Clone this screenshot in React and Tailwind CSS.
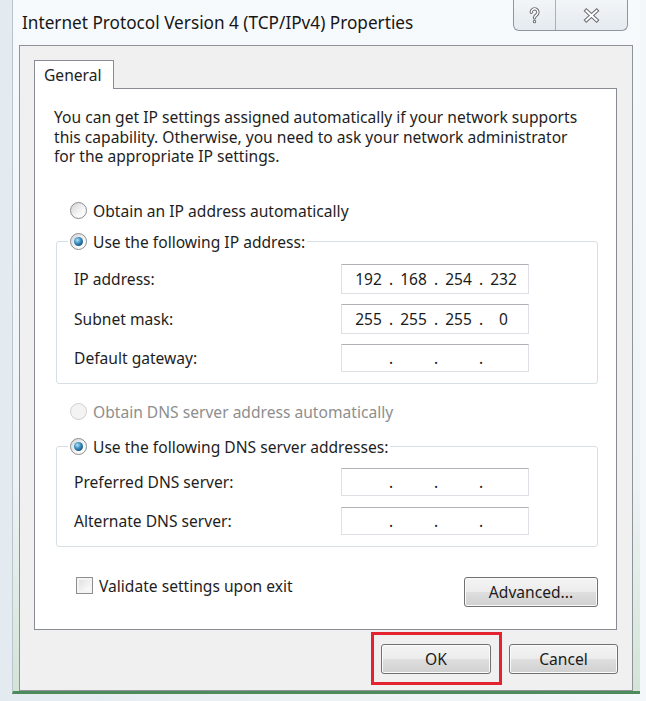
import React from 'react'

const Radio = ({ checked, disabled }) => (
  <span
    className={`flex h-[17px] w-[17px] shrink-0 items-center justify-center rounded-full border ${
      disabled
        ? 'border-[#cfcfcf] bg-[#f3f3f3]'
        : 'border-[#8a8c8e] bg-[linear-gradient(135deg,#d2d4d6_0%,#f6f6f6_60%,#ffffff_100%)]'
    }`}
  >
    {checked && (
      <span className="h-[9px] w-[9px] rounded-full bg-[radial-gradient(circle_at_38%_35%,#b4e3f7_0%,#3b8fc2_40%,#164a74_80%,#0d3355_100%)]" />
    )}
  </span>
)

const IpField = ({ parts, tall }) => (
  <div
    className={`flex w-[188px] items-center border border-[#dde1e6] border-t-[#aeb1b6] bg-white pl-[10px] text-[15.5px] text-[#1b1b1b] ${
      tall ? 'h-[30px]' : 'h-[28px]'
    }`}
  >
    {parts.map((p, i) => (
      <React.Fragment key={i}>
        {i > 0 && <span className="w-[12px] text-center">.</span>}
        <span className="w-[33px] text-center">{p}</span>
      </React.Fragment>
    ))}
  </div>
)

const WinButton = ({ children, className }) => (
  <button
    className={`flex h-[30px] items-center justify-center rounded-[3px] border border-[#707070] bg-[linear-gradient(to_bottom,#f4f4f4_0%,#ececec_48%,#dedede_52%,#d0d0d0_100%)] text-[15.6px] text-[#1b1b1b] shadow-[inset_0_0_0_1px_#fbfbfb] ${className}`}
  >
    {children}
  </button>
)

const GroupBox = ({ label, children, className }) => (
  <fieldset className={`ml-[2px] w-[542px] rounded-[3px] border border-[#d5dfe5] ${className}`}>
    <legend className="ml-[11px] px-[2px]">
      <span className="flex h-[20px] items-center gap-[6px]">
        <Radio checked />
        <span>{label}</span>
      </span>
    </legend>
    {children}
  </fieldset>
)

const Row = ({ label, children }) => (
  <div className="flex items-center justify-between pl-[17px] pr-[68px]">
    <span>{label}</span>
    {children}
  </div>
)

export default function App() {
  const empty = ['', '', '', '']
  return (
    <div className="h-[701px] w-[646px] overflow-hidden bg-[linear-gradient(to_right,#e4ebf0_0%,#f4f7f9_100%)] font-['Noto_Sans','Open_Sans',sans-serif] text-[15.6px] leading-[20px] text-[#1e1e1e]">
      <div className="ml-[12px] flex h-[694px] w-[628px] flex-col border-b-[3px] border-l border-[#4d8a5c] border-l-[#b9c4cc] bg-[linear-gradient(to_bottom,#f7fafc_0%,#eef3f6_70%,#d3e4d6_100%)] pl-[6px]">
        {/* Title bar */}
        <div className="flex h-[45px] items-start justify-between pr-[12px]">
          <div className="pl-[3px] pt-[12px] text-[17.2px] leading-[22px] text-[#161616]">
            Internet Protocol Version 4 (TCP/IPv4) Properties
          </div>
          <div className="flex h-[31px] overflow-hidden rounded-b-[6px] border border-t-0 border-[#8e969e] bg-[linear-gradient(to_bottom,#f2f5f8_0%,#e4eaef_100%)]">
            <div className="flex w-[42px] items-center justify-center border-r border-[#a8b0b8]">
              <svg width="13" height="19" viewBox="0 0 14 20">
                <g fill="none" strokeLinecap="round" strokeLinejoin="round">
                  <path d="M3.5 6.5 A3.6 3.6 0 1 1 9 9.5 C7.6 10.4 7 11 7 12.6 M7 16.4 L7 16.6" stroke="#6b6f73" strokeWidth="3.6" />
                  <path d="M3.5 6.5 A3.6 3.6 0 1 1 9 9.5 C7.6 10.4 7 11 7 12.6 M7 16.4 L7 16.6" stroke="#ffffff" strokeWidth="1.5" />
                </g>
              </svg>
            </div>
            <div className="flex w-[71px] items-center justify-center">
              <svg width="17" height="15" viewBox="0 0 18 16">
                <g fill="none" strokeLinecap="square">
                  <path d="M3.5 3 L14.5 13 M14.5 3 L3.5 13" stroke="#6b6f73" strokeWidth="4.2" />
                  <path d="M3.5 3 L14.5 13 M14.5 3 L3.5 13" stroke="#ffffff" strokeWidth="2" />
                </g>
              </svg>
            </div>
          </div>
        </div>

        {/* Dialog body */}
        <div className="flex h-[646px] w-[614px] flex-col border border-[#8d9399] bg-[#f0f0f0] pl-[14px] pt-[14px]">
          <div className="relative z-10 -mb-px flex h-[29px] w-[80px] items-center border border-b-0 border-[#898c95] bg-white pl-[9px]">
            General
          </div>
          <div className="flex h-[542px] w-[583px] flex-col border border-[#898c95] bg-white pl-[19px] pt-[19px]">
            <p className="leading-[19.5px]">
              You can get IP settings assigned automatically if your network supports
              <br />
              this capability. Otherwise, you need to ask your network administrator
              <br />
              for the appropriate IP settings.
            </p>

            <label className="ml-[16px] mt-[34px] flex h-[20px] items-center gap-[6px]">
              <Radio />
              <span>Obtain an IP address automatically</span>
            </label>

            <GroupBox label="Use the following IP address:" className="mt-[11px] pb-[11px] pt-[12px]">
              <div className="flex flex-col gap-[10px]">
                <Row label="IP address:">
                  <IpField tall parts={['192', '168', '254', '232']} />
                </Row>
                <Row label="Subnet mask:">
                  <IpField tall parts={['255', '255', '255', '0']} />
                </Row>
                <Row label="Default gateway:">
                  <IpField parts={empty} />
                </Row>
              </div>
            </GroupBox>

            <label className="ml-[16px] mt-[18px] flex h-[20px] items-center gap-[6px] text-[#8e8e8e]">
              <Radio disabled />
              <span>Obtain DNS server address automatically</span>
            </label>

            <GroupBox label="Use the following DNS server addresses:" className="mt-[15px] pb-[11px] pt-[11px]">
              <div className="flex flex-col gap-[11px]">
                <Row label="Preferred DNS server:">
                  <IpField parts={empty} />
                </Row>
                <Row label="Alternate DNS server:">
                  <IpField parts={empty} />
                </Row>
              </div>
            </GroupBox>

            <div className="mt-[29px] flex items-start justify-between pr-[18px]">
              <label className="ml-[22px] flex h-[20px] items-center gap-[6px]">
                <span className="h-[17px] w-[17px] border border-[#8e8f8f] bg-[linear-gradient(135deg,#dcdcdc_0%,#f7f7f7_70%,#ffffff_100%)] shadow-[inset_0_0_0_2px_#f4f4f4]" />
                <span>Validate settings upon exit</span>
              </label>
              <WinButton className="mt-[1px] w-[134px]">Advanced...</WinButton>
            </div>
          </div>

          {/* Bottom buttons */}
          <div className="mt-[2px] flex items-center justify-end gap-[7px] pr-[14px]">
            <div className="border-[3px] border-[#e3232f] pb-[8px] pl-[7px] pr-[8px] pt-[9px]">
              <WinButton className="w-[110px]">OK</WinButton>
            </div>
            <WinButton className="w-[109px]">Cancel</WinButton>
          </div>
        </div>
      </div>
    </div>
  )
}
